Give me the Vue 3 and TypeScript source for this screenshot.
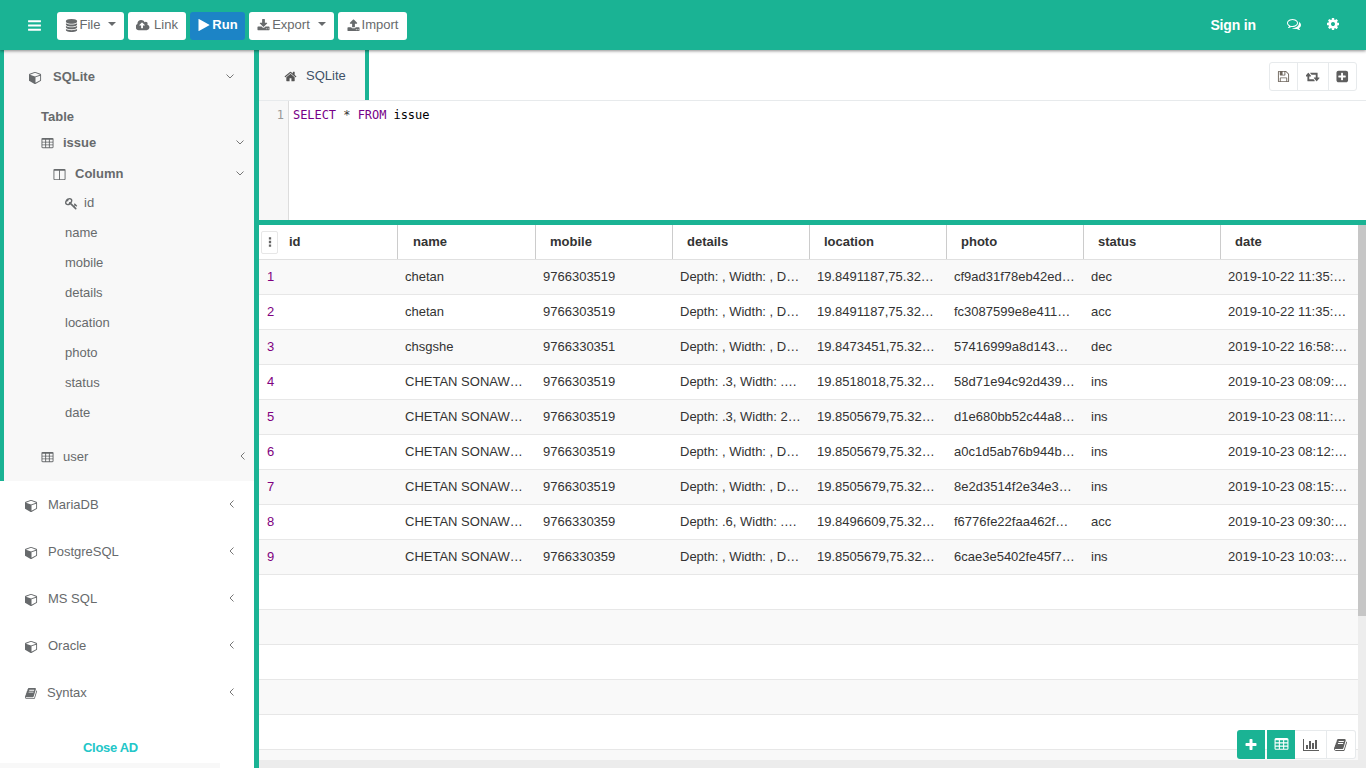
<script setup lang="ts">
import { h } from 'vue'

const icons: Record<string, [number, string]> = {
  bars: [1792, 'M1664 1344v128q0 26-19 45t-45 19h-1408q-26 0-45-19t-19-45v-128q0-26 19-45t45-19h1408q26 0 45 19t19 45zm0-512v128q0 26-19 45t-45 19h-1408q-26 0-45-19t-19-45v-128q0-26 19-45t45-19h1408q26 0 45 19t19 45zm0-512v128q0 26-19 45t-45 19h-1408q-26 0-45-19t-19-45v-128q0-26 19-45t45-19h1408q26 0 45 19t19 45z'],
  database: [1792, 'M896 768q237 0 443-43t325-127v170q0 69-103 128t-280 93.5-385 34.5-385-34.5-280-93.5-103-128v-170q119 84 325 127t443 43zm0 768q237 0 443-43t325-127v170q0 69-103 128t-280 93.5-385 34.5-385-34.5-280-93.5-103-128v-170q119 84 325 127t443 43zm0-384q237 0 443-43t325-127v170q0 69-103 128t-280 93.5-385 34.5-385-34.5-280-93.5-103-128v-170q119 84 325 127t443 43zm0-1152q208 0 385 34.5t280 93.5 103 128v128q0 69-103 128t-280 93.5-385 34.5-385-34.5-280-93.5-103-128v-128q0-69 103-128t280-93.5 385-34.5z'],
  cloud: [1920, 'M1216 864q0-14-9-23l-352-352q-9-9-23-9t-23 9l-351 351q-10 12-10 24 0 14 9 23t23 9h224v352q0 13 9.5 22.5t22.5 9.5h192q13 0 22.5-9.5t9.5-22.5v-352h224q13 0 22.5-9.5t9.5-22.5zm640 288q0 159-112.5 271.5t-271.5 112.5h-1088q-185 0-316.5-131.5t-131.5-316.5q0-130 70-240t188-165q-2-30-2-43 0-212 150-362t362-150q156 0 285.5 87t188.5 231q71-62 166-62 106 0 181 75t75 181q0 76-41 138 130 31 213.5 135.5t83.5 238.5z'],
  play: [1792, 'M1576 927l-1328 738q-23 13-39.5 3t-16.5-36v-1472q0-26 16.5-36t39.5 3l1328 738q23 13 23 31t-23 31z'],
  download: [1792, 'M1344 1344q0-26-19-45t-45-19-45 19-19 45 19 45 45 19 45-19 19-45zm256 0q0-26-19-45t-45-19-45 19-19 45 19 45 45 19 45-19 19-45zm128-224v320q0 40-28 68t-68 28h-1472q-40 0-68-28t-28-68v-320q0-40 28-68t68-28h465l135 136q58 56 136 56t136-56l136-136h464q40 0 68 28t28 68zm-325-569q17 41-14 70l-448 448q-18 19-45 19t-45-19l-448-448q-31-29-14-70 17-39 59-39h256v-448q0-26 19-45t45-19h256q26 0 45 19t19 45v448h256q42 0 59 39z'],
  upload: [1792, 'M1344 1472q0-26-19-45t-45-19-45 19-19 45 19 45 45 19 45-19 19-45zm256 0q0-26-19-45t-45-19-45 19-19 45 19 45 45 19 45-19 19-45zm128-224v320q0 40-28 68t-68 28h-1472q-40 0-68-28t-28-68v-320q0-40 28-68t68-28h427q21 56 70.5 92t110.5 36h256q61 0 110.5-36t70.5-92h427q40 0 68 28t28 68zm-325-648q-17 40-59 40h-256v448q0 26-19 45t-45 19h-256q-26 0-45-19t-19-45v-448h-256q-42 0-59-40-17-39 14-69l448-448q18-19 45-19t45 19l448 448q31 30 14 69z'],
  comments: [1792, 'M704 384q-153 0-286 52t-211.5 141-78.5 191q0 82 53 158t149 132l97 56-35 84q34-20 62-39l44-31 53 10q78 14 153 14 153 0 286-52t211.5-141 78.5-191-78.5-191-211.5-141-286-52zm0-128q191 0 353.5 68.5t256.5 186.5 94 257-94 257-256.5 186.5-353.5 68.5q-86 0-176-16-124 88-278 128-36 9-86 16h-3q-11 0-20.5-8t-11.5-21q-1-3-1-6.5t.5-6.5 2-6l2.5-5 3.5-5.5 4-5 4.5-5 4-4.5q5-6 23-25t26-29.5 22.5-29 25-38.5 20.5-44q-124-72-195-177t-71-224q0-139 94-257t256.5-186.5 353.5-68.5zm822 1169q10 24 20.5 44t25 38.5 22.5 29 26 29.5 23 25q1 1 4 4.5t4.5 5 4 5 3.5 5.5l2.5 5 2 6 .5 6.5-1 6.5q-3 14-13 22t-22 7q-50-7-86-16-154-40-278-128-90 16-176 16-271 0-472-132 58 4 88 4 161 0 309-45t264-129q125-92 192-212t67-254q0-77-23-152 129 71 204 178t75 230q0 120-71 224.5t-195 176.5z'],
  cog: [1792, 'M1152 896q0-106-75-181t-181-75-181 75-75 181 75 181 181 75 181-75 75-181zm512-109v222q0 12-8 23t-20 13l-185 28q-19 54-39 91 35 50 107 138 10 12 10 25t-9 23q-27 37-99 108t-94 71q-12 0-26-9l-138-108q-44 23-91 38-16 136-29 186-7 28-36 28h-222q-14 0-24.5-8.5t-11.5-21.5l-28-184q-49-16-90-37l-141 107q-10 9-25 9-14 0-25-11-126-114-165-168-7-10-7-23 0-12 8-23 15-21 51-66.5t54-70.5q-27-50-41-99l-183-27q-13-2-21-12.5t-8-23.5v-222q0-12 8-23t19-13l186-28q14-46 39-92-40-57-107-138-10-12-10-24 0-10 9-23 26-36 98.5-107.5t94.5-71.5q13 0 26 10l138 107q44-23 91-38 16-136 29-186 7-28 36-28h222q14 0 24.5 8.5t11.5 21.5l28 184q49 16 90 37l142-107q9-9 24-9 13 0 25 10 129 119 165 170 7 8 7 22 0 12-8 23-15 21-51 66.5t-54 70.5q26 50 41 98l183 28q13 2 21 12.5t8 23.5z'],
  cube: [1792, 'M896 1629l640-349v-636l-640 233v752zm-64-864l698-254-698-254-698 254zm832-252v768q0 35-18 65t-50 47l-704 384q-28 16-61 16t-61-16l-704-384q-32-17-50-47t-18-65v-768q0-40 23-73t61-49l704-256q22-8 44-8t44 8l704 256q38 14 61 49t23 73z'],
  home: [1792, 'M1472 992v480q0 26-19 45t-45 19h-384v-384h-256v384h-384q-26 0-45-19t-19-45v-480q0-1 .5-3t.5-3l575-474 575 474q1 2 1 6zm223-69l-62 74q-8 9-21 11h-3q-13 0-21-7l-692-577-692 577q-12 8-24 7-13-2-21-11l-62-74q-8-10-7-23.5t11-21.5l719-599q32-26 76-26t76 26l244 204v-195q0-14 9-23t23-9h192q14 0 23 9t9 23v408l219 182q10 8 11 21.5t-7 23.5z'],
  table: [1792, 'M576 1376v-192q0-14-9-23t-23-9h-320q-14 0-23 9t-9 23v192q0 14 9 23t23 9h320q14 0 23-9t9-23zm0-384v-192q0-14-9-23t-23-9h-320q-14 0-23 9t-9 23v192q0 14 9 23t23 9h320q14 0 23-9t9-23zm512 384v-192q0-14-9-23t-23-9h-320q-14 0-23 9t-9 23v192q0 14 9 23t23 9h320q14 0 23-9t9-23zm-512-768v-192q0-14-9-23t-23-9h-320q-14 0-23 9t-9 23v192q0 14 9 23t23 9h320q14 0 23-9t9-23zm512 384v-192q0-14-9-23t-23-9h-320q-14 0-23 9t-9 23v192q0 14 9 23t23 9h320q14 0 23-9t9-23zm512 384v-192q0-14-9-23t-23-9h-320q-14 0-23 9t-9 23v192q0 14 9 23t23 9h320q14 0 23-9t9-23zm-512-768v-192q0-14-9-23t-23-9h-320q-14 0-23 9t-9 23v192q0 14 9 23t23 9h320q14 0 23-9t9-23zm512 384v-192q0-14-9-23t-23-9h-320q-14 0-23 9t-9 23v192q0 14 9 23t23 9h320q14 0 23-9t9-23zm0-384v-192q0-14-9-23t-23-9h-320q-14 0-23 9t-9 23v192q0 14 9 23t23 9h320q14 0 23-9t9-23zm128-320v1088q0 66-47 113t-113 47h-1344q-66 0-113-47t-47-113v-1088q0-66 47-113t113-47h1344q66 0 113 47t47 113z'],
  columns: [1792, 'M224 1536h608v-1152h-640v1120q0 13 9.5 22.5t22.5 9.5zm1376-32v-1120h-640v1152h608q13 0 22.5-9.5t9.5-22.5zm128-1216v1216q0 66-47 113t-113 47h-1344q-66 0-113-47t-47-113v-1216q0-66 47-113t113-47h1344q66 0 113 47t47 113z'],
  key: [1792, 'M832 512q0-80-56-136t-136-56-136 56-56 136q0 42 19 83-41-19-83-19-80 0-136 56t-56 136 56 136 136 56 136-56 56-136q0-42-19-83 41 19 83 19 80 0 136-56t56-136zm851 704q0 17-49 66t-66 49q-9 0-28.5-16t-36.5-33-38.5-40-24.5-26l-96 96 220 220q28 28 28 68 0 42-39 81t-81 39q-40 0-68-28l-671-671q-176 131-365 131-163 0-265.5-102.5t-102.5-265.5q0-160 95-313t248-248 313-95q163 0 265.5 102.5t102.5 265.5q0 189-131 365l355 355 96-96q-2-2-26-24.5t-40-38.5-33-36.5-16-28.5q0-17 49-66t66-49q13 0 23 10 6 6 46 44.5t82 79.5 86.5 86 73 78 28.5 41z'],
  save: [1792, 'M512 1536h768v-384h-768v384zm896 0h128v-896q0-14-10-38.5t-20-34.5l-281-281q-10-10-34-20t-39-10v416q0 40-28 68t-68 28h-576q-40 0-68-28t-28-68v-416h-128v1280h128v-416q0-40 28-68t68-28h832q40 0 68 28t28 68v416zm-384-928v-320q0-13-9.5-22.5t-22.5-9.5h-192q-13 0-22.5 9.5t-9.5 22.5v320q0 13 9.5 22.5t22.5 9.5h192q13 0 22.5-9.5t9.5-22.5zm640 32v928q0 40-28 68t-68 28h-1344q-40 0-68-28t-28-68v-1344q0-40 28-68t68-28h928q40 0 88 20t76 48l280 280q28 28 48 76t20 88z'],
  retweet: [1920, 'M1216 1504q0 13-9.5 22.5t-22.5 9.5h-960q-8 0-13.5-2t-9-7-5.5-8-3-11.5-1-11.5v-600h-192q-26 0-45-19t-19-45q0-24 15-41l320-384q19-22 49-22t49 22l320 384q15 17 15 41 0 26-19 45t-45 19h-192v384h576q16 0 25 11l160 192q7 10 7 21zm640-416q0 24-15 41l-320 384q-20 23-49 23t-49-23l-320-384q-15-17-15-41 0-26 19-45t45-19h192v-384h-576q-16 0-25-12l-160-192q-7-9-7-20 0-13 9.5-22.5t22.5-9.5h960q8 0 13.5 2t9 7 5.5 8 3 11.5 1 11.5v600h192q26 0 45 19t19 45z'],
  plusSquare: [1792, 'M1344 960v-128q0-26-19-45t-45-19h-320v-320q0-26-19-45t-45-19h-128q-26 0-45 19t-19 45v320h-320q-26 0-45 19t-19 45v128q0 26 19 45t45 19h320v320q0 26 19 45t45 19h128q26 0 45-19t19-45v-320h320q26 0 45-19t19-45zm320-576v1024q0 119-84.5 203.5t-203.5 84.5h-1024q-119 0-203.5-84.5t-84.5-203.5v-1024q0-119 84.5-203.5t203.5-84.5h1024q119 0 203.5 84.5t84.5 203.5z'],
  plus: [1792, 'M1600 736v192q0 40-28 68t-68 28h-416v416q0 40-28 68t-68 28h-192q-40 0-68-28t-28-68v-416h-416q-40 0-68-28t-28-68v-192q0-40 28-68t68-28h416v-416q0-40 28-68t68-28h192q40 0 68 28t28 68v416h416q40 0 68 28t28 68z'],
  chart: [2048, 'M640 896v512h-256v-512h256zm384-512v1024h-256v-1024h256zm1024 1152v128h-2048v-1536h128v1408h1920zm-640-896v768h-256v-768h256zm384-384v1152h-256v-1152h256z'],
  book: [1792, 'M1639 478q40 57 18 129l-275 906q-19 64-76.5 107.5t-122.5 43.5h-923q-77 0-148.5-53.5t-99.5-131.5q-24-67-2-127 0-4 3-27t4-37q1-8-3-21.5t-3-19.5q2-11 8-21t16.5-23.5 16.5-23.5q23-38 45-91.5t30-91.5q3-10 .5-30t-.5-28q3-11 17-28t17-23q21-36 42-92t25-90q1-9-2.5-32t.5-28q4-13 22-30.5t22-22.5q19-26 42.5-84.5t27.5-96.5q1-8-3-25.5t-2-26.5q2-8 9-18t18-23 17-21q8-12 16.5-30.5t15-35 16-36 19.5-32 26.5-23.5 36-11.5 47.5 5.5l-1 3q38-9 51-9h761q74 0 114 56t18 130l-274 906q-36 119-71.5 153.5t-128.5 34.5h-869q-27 0-38 15-11 16-1 43 24 70 144 70h923q29 0 56-15.5t35-41.5l300-987q7-22 5-57 38 15 59 43zm-1064 2q-4 13 2 22.5t20 9.5h608q13 0 25.5-9.5t16.5-22.5l21-64q4-13-2-22.5t-20-9.5h-608q-13 0-25.5 9.5t-16.5 22.5zm-83 256q-4 13 2 22.5t20 9.5h608q13 0 25.5-9.5t16.5-22.5l21-64q4-13-2-22.5t-20-9.5h-608q-13 0-25.5 9.5t-16.5 22.5z'],
  kebab: [1792, 'M750 280h292v292H750zM750 750h292v292H750zM750 1220h292v292H750z']
}

const Ic = (props: { n: string; s?: number }) => {
  const [w, d] = icons[props.n]
  const s = props.s ?? 13
  return h('svg', {
    class: 'ic',
    viewBox: `0 0 ${w} 1792`,
    style: { width: `${(w / 1792) * s}px`, height: `${s}px` }
  }, [h('path', { d })])
}

const fields = ['name', 'mobile', 'details', 'location', 'photo', 'status', 'date']
const otherDbs = [
  { label: 'MariaDB', icon: 'cube' },
  { label: 'PostgreSQL', icon: 'cube' },
  { label: 'MS SQL', icon: 'cube' },
  { label: 'Oracle', icon: 'cube' },
  { label: 'Syntax', icon: 'book' }
]
const columns = ['id', 'name', 'mobile', 'details', 'location', 'photo', 'status', 'date']
const C = 'CHETAN SONAW…'
const rows: string[][] = [
  ['1', 'chetan', '9766303519', 'Depth: , Width: , D…', '19.8491187,75.32…', 'cf9ad31f78eb42ed…', 'dec', '2019-10-22 11:35:…'],
  ['2', 'chetan', '9766303519', 'Depth: , Width: , D…', '19.8491187,75.32…', 'fc3087599e8e411…', 'acc', '2019-10-22 11:35:…'],
  ['3', 'chsgshe', '9766330351', 'Depth: , Width: , D…', '19.8473451,75.32…', '57416999a8d143…', 'dec', '2019-10-22 16:58:…'],
  ['4', C, '9766303519', 'Depth: .3, Width: .…', '19.8518018,75.32…', '58d71e94c92d439…', 'ins', '2019-10-23 08:09:…'],
  ['5', C, '9766303519', 'Depth: .3, Width: 2…', '19.8505679,75.32…', 'd1e680bb52c44a8…', 'ins', '2019-10-23 08:11:…'],
  ['6', C, '9766303519', 'Depth: , Width: , D…', '19.8505679,75.32…', 'a0c1d5ab76b944b…', 'ins', '2019-10-23 08:12:…'],
  ['7', C, '9766303519', 'Depth: , Width: , D…', '19.8505679,75.32…', '8e2d3514f2e34e3…', 'ins', '2019-10-23 08:15:…'],
  ['8', C, '9766330359', 'Depth: .6, Width: .…', '19.8496609,75.32…', 'f6776fe22faa462f…', 'acc', '2019-10-23 09:30:…'],
  ['9', C, '9766330359', 'Depth: , Width: , D…', '19.8505679,75.32…', '6cae3e5402fe45f7…', 'ins', '2019-10-23 10:03:…'],
  [], [], [], [], [], []
]
</script>

<template>
  <div class="page">
    <header class="topbar">
      <button class="burger"><Ic n="bars" :s="15" /></button>
      <div class="tools">
        <button class="btn w67"><Ic n="database" />File<span class="caret"></span></button>
        <button class="btn w58"><Ic n="cloud" />Link</button>
        <button class="btn run"><Ic n="play" :s="14" />Run</button>
        <button class="btn w85"><Ic n="download" />Export<span class="caret"></span></button>
        <button class="btn w69"><Ic n="upload" />Import</button>
      </div>
      <div class="top-right">
        <span class="signin">Sign in</span>
        <Ic class="t-comments" n="comments" :s="14" />
        <Ic class="t-cog" n="cog" :s="14" />
      </div>
    </header>

    <div class="body">
      <aside class="sidebar">
        <section class="active">
          <div class="db-head">
            <Ic n="cube" />
            <b class="db-label">SQLite</b>
            <svg class="chev" viewBox="0 0 10 10"><path d="M1.5 3.5L5 7l3.5-3.5" /></svg>
          </div>
          <div class="tree-title">Table</div>
          <div class="tree-row issue">
            <Ic n="table" />
            <b>issue</b>
            <svg class="chev" viewBox="0 0 10 10"><path d="M1.5 3.5L5 7l3.5-3.5" /></svg>
          </div>
          <div class="tree-row column">
            <Ic n="columns" />
            <b>Column</b>
            <svg class="chev" viewBox="0 0 10 10"><path d="M1.5 3.5L5 7l3.5-3.5" /></svg>
          </div>
          <div class="field first">
            <Ic n="key" />
            <span>id</span>
          </div>
          <div v-for="f in fields" :key="f" class="field">{{ f }}</div>
          <div class="tree-row user">
            <Ic n="table" />
            <span>user</span>
            <svg class="chev" viewBox="0 0 10 10"><path d="M6.5 1.5L3 5l3.5 3.5" /></svg>
          </div>
        </section>
        <div v-for="d in otherDbs" :key="d.label" class="db-item">
          <Ic :n="d.icon" />
          <span class="db-name" :class="{ syn: d.icon === 'book' }">{{ d.label }}</span>
          <svg class="chev" viewBox="0 0 10 10"><path d="M6.5 1.5L3 5l3.5 3.5" /></svg>
        </div>
        <div class="close-ad">Close AD</div>
        <div class="ad"></div>
      </aside>

      <main class="main">
        <div class="tabbar">
          <div class="tab">
            <Ic n="home" />
            <span>SQLite</span>
          </div>
          <div class="tab-actions">
            <button class="mini m1"><Ic n="save" /></button>
            <button class="mini m2"><Ic n="retweet" /></button>
            <button class="mini m3"><Ic n="plusSquare" /></button>
          </div>
        </div>
        <div class="editor">
          <div class="gutter">1</div>
          <pre class="code"><span class="kw">SELECT</span> <span class="op">*</span> <span class="kw">FROM</span> issue</pre>
        </div>
        <div class="result">
          <div class="grid-wrap">
            <div class="grid">
              <div class="head">
                <div v-for="(c, i) in columns" :key="c" class="hcell" :class="{ firsth: i === 0, second: i === 1 }">
                  <span v-if="i === 0" class="menu"><Ic n="kebab" :s="14" /></span>
                  {{ c }}
                </div>
              </div>
              <div v-for="(r, ri) in rows" :key="ri" class="row" :class="{ odd: ri % 2 === 0 }">
                <div v-for="(_, ci) in columns" :key="ci" class="cell" :class="{ num: ci === 0 }">{{ r[ci] }}</div>
              </div>
            </div>
            <div class="vscroll"><div class="thumb"></div></div>
          </div>
          <div class="hscroll"></div>
          <div class="fab">
            <button class="fb add"><Ic n="plus" :s="14" /></button>
            <button class="fb on"><Ic n="table" :s="15" /></button>
            <button class="fb chart"><Ic n="chart" :s="14" /></button>
            <button class="fb last"><Ic n="book" :s="14" /></button>
          </div>
        </div>
      </main>
    </div>
  </div>
</template>

<style>
html, body { margin: 0; height: 100%; overflow: hidden; background: #fff; }
</style>

<style scoped>
* { box-sizing: border-box; }
.page { width: 1366px; height: 768px; display: flex; flex-direction: column; font: 13px/1.4 "Liberation Sans", Arial, sans-serif; color: #676a6c; overflow: hidden; }
button { font: inherit; border: 0; padding: 0; background: none; }
.ic { fill: currentColor; flex: none; display: block; }

.topbar { height: 50px; flex: none; background: #1ab394; display: flex; align-items: center; position: relative; z-index: 2; box-shadow: 0 1px 3px rgba(0, 0, 0, .45); }
.burger { color: #fff; margin-left: 27px; width: 15px; }
.tools { display: flex; gap: 4px; margin-left: 15px; margin-top: 1px; }
.btn { height: 28px; background: #fff; border-radius: 3px; display: flex; align-items: center; justify-content: center; gap: 2px; color: #676a6c; padding-bottom: 1px; }
.w67 { width: 67px; } .w58 { width: 58px; gap: 4px; } .w85 { width: 85px; } .w69 { width: 69px; }
.btn.run { width: 55px; background: #1c84c6; color: #fff; font-weight: 700; gap: 1px; }
.caret { width: 0; height: 0; border: 4px solid transparent; border-top-color: currentColor; border-bottom: 0; margin-left: 6px; margin-top: -3px; }
.top-right { margin-left: auto; display: flex; align-items: center; color: #fff; padding-right: 26px; }
.signin { font-weight: 700; font-size: 14px; margin-right: 31px; margin-top: 2px; letter-spacing: -.15px; }
.t-comments { margin-right: 25px; margin-bottom: 2px; }
.t-cog { margin-bottom: 2px; }

.body { flex: 1; display: flex; min-height: 0; }
.sidebar { width: 259px; flex: none; border-right: 5px solid #1ab394; display: flex; flex-direction: column; }
.active { background: #f8f8f8; border-left: 4px solid #1ab394; height: 431px; padding: 1px 0 0 25px; }
.db-head { height: 52px; display: flex; align-items: center; color: #676a6c; }
.db-label { margin-left: 11px; }
.chev { width: 10px; height: 10px; fill: none; stroke: #777; stroke-width: 1; margin-left: auto; flex: none; }
.db-head .chev { margin-right: 19px; margin-bottom: 2px; }
.tree-title { font-weight: 700; padding-left: 12px; margin-top: 4px; line-height: 20px; }
.tree-row { display: flex; align-items: center; }
.tree-row .chev { margin-right: 9px; margin-bottom: 2px; }
.issue { height: 32px; padding-left: 12px; }
.issue b, .user span { margin-left: 9px; }
.column { height: 30px; padding-left: 24px; }
.column b { margin-left: 9px; }
.field { height: 30px; display: flex; align-items: center; padding-left: 36px; }
.field.first { margin-top: -1px; }
.field.first .ic { margin-right: 6px; }
.user { height: 44px; margin-top: 7px; padding-left: 12px; }
.tree-row.user .chev { margin-right: 6px; }
.db-item { height: 47px; display: flex; align-items: center; padding: 2px 0 0 25px; flex: none; }
.db-name { margin-left: 10px; }
.db-name.syn { margin-left: 9px; }
.db-item .chev { margin-right: 17px; margin-bottom: 4px; }
.close-ad { margin-top: 23px; width: 221px; text-align: center; color: #23c6c8; font-weight: 700; line-height: 18px; flex: none; letter-spacing: -.3px; }
.ad { margin-top: 6px; width: 220px; flex: 1; background: #f8f8f8; }

.main { flex: 1; min-width: 0; display: flex; flex-direction: column; }
.tabbar { height: 51px; flex: none; border-bottom: 1px solid #e7eaec; display: flex; }
.tab { width: 110px; height: 50px; background: #f8f8f8; border-right: 4px solid #1ab394; display: flex; align-items: center; gap: 9px; padding: 2px 0 0 25px; color: #3f5268; }
.tab .ic { color: #555; }
.tab-actions { margin-left: auto; margin-right: 9px; margin-top: 12px; height: 29px; display: flex; border: 1px solid #e7eaec; border-radius: 3px; }
.mini { display: flex; align-items: center; justify-content: center; color: #5e5e5e; }
.mini + .mini { border-left: 1px solid #e7eaec; }
.m1 { width: 27px; color: #6e655c; } .m2 { width: 31px; } .m3 { width: 28px; }
.editor { height: 119px; flex: none; display: flex; }
.gutter { width: 30px; background: #f7f7f7; border-right: 1px solid #ddd; text-align: right; padding: 7px 4px 0 0; font: 12px/15px "DejaVu Sans Mono", monospace; color: #999; }
.code { margin: 0; padding: 7px 0 0 4px; font: 12px/15px "DejaVu Sans Mono", monospace; color: #000; letter-spacing: -.05px; }
.kw { color: #708; }
.op { color: #333; }

.result { flex: 1; min-height: 0; border-top: 5px solid #1ab394; display: flex; flex-direction: column; position: relative; }
.grid-wrap { flex: 1; min-height: 0; display: flex; overflow: hidden; }
.grid { width: 1099px; flex: none; }
.head { display: grid; grid-template-columns: 139px 138px repeat(6, 137px); height: 35px; border-bottom: 1px solid #e0e0e0; }
.row { display: grid; grid-template-columns: 138px 138px repeat(5, 137px) 138px; height: 35px; border-bottom: 1px solid #e7e7e7; }
.hcell { border-right: 1px solid #ccc; display: flex; align-items: center; padding-left: 14px; font-weight: 700; color: #333; }
.hcell.second { padding-left: 15px; }
.hcell.firsth { padding-left: 2px; gap: 11px; }
.hcell:last-child { border-right: 0; }
.menu { width: 17px; height: 23px; border: 1px solid #e7e7e7; border-radius: 2px; display: flex; align-items: center; justify-content: center; color: #666; }
.row.odd { background: #f9f9f9; }
.cell { padding-left: 8px; line-height: 34px; color: #333; white-space: nowrap; overflow: hidden; }
.cell.num { color: #800080; }
.vscroll { width: 8px; margin-left: auto; background: #ededed; }
.thumb { height: 391px; background: #c6c6c6; }
.hscroll { height: 8px; flex: none; background: #ececec; }
.fab { position: absolute; right: 10px; bottom: 9px; height: 29px; display: flex; }
.fb { display: flex; align-items: center; justify-content: center; color: #5e5e5e; background: #fff; border-top: 1px solid #e7eaec; border-bottom: 1px solid #e7eaec; }
.fb.add { width: 28px; background: #1ab394; color: #fff; border: 0; border-radius: 3px 0 0 3px; margin-right: 2px; }
.fb.on { width: 28px; background: #1ab394; color: #fff; border: 0; }
.fb.chart { width: 32px; border-right: 1px solid #e7eaec; }
.fb.last { width: 29px; border-right: 1px solid #e7eaec; border-radius: 0 3px 3px 0; }
</style>
